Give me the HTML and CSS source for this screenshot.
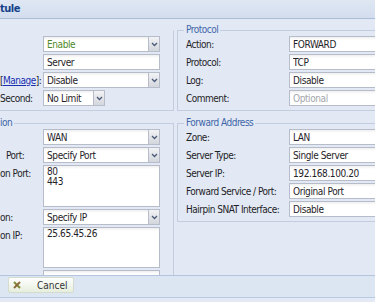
FILE: index.html
```html
<!DOCTYPE html>
<html lang="en">
<head>
    <meta charset="UTF-8" />
    <meta name="viewport" content="width=device-width, initial-scale=1.0"/>
    <title>Edit Rule</title>
    <link rel="stylesheet" href="styles.css">
</head>
<body>
<div class="window">
    <div class="title">tule</div>
    <div class="body">
        <div class="cols">
            <div class="col left">
                <fieldset class="no-top">
                    <legend></legend>
                    <div class="row"><label></label>
                        <div class="combo"><input class="field green" value="Enable" readonly><span class="trigger"><svg width="7" height="5" viewBox="0 0 7 5"><path d="M1 1 L3.5 3.5 L6 1" fill="none" stroke="#4a5a78" stroke-width="1.3"/></svg></span></div>
                    </div>
                    <div class="row"><label></label><input class="field" value="Server" readonly></div>
                    <div class="row"><label>[<a href="#">Manage</a>]:</label>
                        <div class="combo"><input class="field" value="Disable" readonly><span class="trigger"><svg width="7" height="5" viewBox="0 0 7 5"><path d="M1 1 L3.5 3.5 L6 1" fill="none" stroke="#4a5a78" stroke-width="1.3"/></svg></span></div>
                    </div>
                    <div class="row"><label>Second:</label>
                        <div class="combo short"><input class="field" value="No Limit" readonly><span class="trigger"><svg width="7" height="5" viewBox="0 0 7 5"><path d="M1 1 L3.5 3.5 L6 1" fill="none" stroke="#4a5a78" stroke-width="1.3"/></svg></span></div>
                    </div>
                </fieldset>
                <fieldset>
                    <legend>ion</legend>
                    <div class="row"><label></label>
                        <div class="combo"><input class="field" value="WAN" readonly><span class="trigger"><svg width="7" height="5" viewBox="0 0 7 5"><path d="M1 1 L3.5 3.5 L6 1" fill="none" stroke="#4a5a78" stroke-width="1.3"/></svg></span></div>
                    </div>
                    <div class="row"><label class="indent">Port:</label>
                        <div class="combo"><input class="field" value="Specify Port" readonly><span class="trigger"><svg width="7" height="5" viewBox="0 0 7 5"><path d="M1 1 L3.5 3.5 L6 1" fill="none" stroke="#4a5a78" stroke-width="1.3"/></svg></span></div>
                    </div>
                    <div class="row tall"><label>on Port:</label><textarea class="field area" readonly>80
443</textarea></div>
                    <div class="row"><label>on:</label>
                        <div class="combo"><input class="field" value="Specify IP" readonly><span class="trigger"><svg width="7" height="5" viewBox="0 0 7 5"><path d="M1 1 L3.5 3.5 L6 1" fill="none" stroke="#4a5a78" stroke-width="1.3"/></svg></span></div>
                    </div>
                    <div class="row tall short-area"><label>on IP:</label><textarea class="field area" readonly>25.65.45.26</textarea></div>
                    <div class="row more"><label></label><input class="field" readonly></div>
                </fieldset>
            </div>
            <div class="col right">
                <fieldset>
                    <legend>Protocol</legend>
                    <div class="row"><label>Action:</label><input class="field" value="FORWARD" readonly></div>
                    <div class="row"><label>Protocol:</label><input class="field" value="TCP" readonly></div>
                    <div class="row"><label>Log:</label><input class="field" value="Disable" readonly></div>
                    <div class="row"><label>Comment:</label><input class="field" placeholder="Optional" readonly></div>
                </fieldset>
                <fieldset>
                    <legend>Forward Address</legend>
                    <div class="row"><label>Zone:</label><input class="field" value="LAN" readonly></div>
                    <div class="row"><label>Server Type:</label><input class="field" value="Single Server" readonly></div>
                    <div class="row"><label>Server IP:</label><input class="field" value="192.168.100.20" readonly></div>
                    <div class="row"><label>Forward Service / Port:</label><input class="field" value="Original Port" readonly></div>
                    <div class="row"><label>Hairpin SNAT Interface:</label><input class="field" value="Disable" readonly></div>
                </fieldset>
            </div>
        </div>
    </div>
    <div class="toolbar">
        <button class="btn">
            <svg width="8" height="8" viewBox="0 0 8 8"><path d="M1 1 L7 7" stroke="#7d8b33" stroke-width="2"/><path d="M7 1 L1 7" stroke="#8c6b3c" stroke-width="2"/></svg>
            <span>Cancel</span>
        </button>
    </div>
    <div class="footer"></div>
</div>
</body>
</html>
```

FILE: styles.css
```css
body {
    margin: 0;
    font-family: "Liberation Sans Narrow", "DejaVu Sans Condensed", "Liberation Sans", sans-serif;
    font-size: 10px;
    letter-spacing: -0.5px;
    color: #1f2328;
    background: #e2e9f4;
}
.window {
    width: 375px;
    height: 302px;
    display: flex;
    flex-direction: column;
    overflow: hidden;
    background: #e2e9f4;
}
.title {
    height: 18px;
    line-height: 18px;
    flex-shrink: 0;
    border-bottom: 1px solid #aabcd8;
    background: linear-gradient(#dfe7f3, #d3ddee);
    color: #15428b;
    font-weight: bold;
    font-size: 11px;
}
.body {
    flex: 1;
    overflow: hidden;
    padding-top: 5px;
}
.cols {
    display: flex;
    gap: 3px;
    margin-left: -9px;
}
.col {
    display: flex;
    flex-direction: column;
    gap: 6px;
    flex-shrink: 0;
}
fieldset {
    margin: 0;
    border: 1px solid #c2cde0;
    padding: 0 13px 2px 8px;
    box-sizing: border-box;
    min-width: 0;
}
fieldset.no-top {
    border-top-color: transparent;
}
legend {
    padding: 0 2px;
    margin-left: -2px;
    height: 12px;
    line-height: 12px;
    color: #3f66a8;
}
.left fieldset {
    width: 183px;
}
.right fieldset {
    width: 260px;
}
.row {
    display: flex;
    align-items: center;
    height: 16px;
    margin-bottom: 2px;
}
.row label {
    flex-shrink: 0;
    white-space: nowrap;
    overflow: hidden;
}
.left .row label {
    width: 43px;
}
.right .row label {
    width: 103px;
}
.row label.indent {
    padding-left: 6px;
    width: 37px;
}
.row a {
    color: #1a2fb0;
}
.field {
    width: 117px;
    height: 16px;
    box-sizing: border-box;
    border: 1px solid #b7bccb;
    background: linear-gradient(#efefef, #fff 3px);
    font: inherit;
    letter-spacing: -0.4px;
    color: #1f2328;
    padding: 0 3px;
    margin: 0;
    outline: none;
}
.field::placeholder {
    color: #a3a6ad;
}
.right .field {
    width: 130px;
}
.field.green {
    color: #4f8a2c;
}
.combo {
    display: flex;
    width: 117px;
    height: 16px;
}
.combo.short {
    width: 62px;
}
.combo .field {
    flex: 1;
    width: auto;
    min-width: 0;
    border-right: 0;
}
.trigger {
    width: 12px;
    box-sizing: border-box;
    border: 1px solid #b7bccb;
    background: linear-gradient(#f2f3f5, #d3d6dc);
    display: flex;
    align-items: center;
    justify-content: center;
}
.row.tall {
    align-items: flex-start;
    height: 42px;
}
.row.short-area {
    height: 41px;
}
.row.tall label {
    padding-top: 3px;
}
.area {
    height: 100%;
    resize: none;
    padding: 1px 3px;
    line-height: 10px;
    overflow: hidden;
}
.toolbar {
    flex-shrink: 0;
    height: 20px;
    border-top: 1px solid #b2c4de;
    border-bottom: 1px solid #b9c9e0;
    background: #dce5f2;
    padding: 1px 8px 0;
    box-sizing: content-box;
}
.btn {
    display: flex;
    align-items: center;
    width: 66px;
    height: 16px;
    padding: 0 0 0 4px;
    border: 1px solid #d4dccd;
    border-radius: 2px;
    background: linear-gradient(#ffffff, #e6eedd);
    font: inherit;
    color: #333;
}
.btn span {
    margin-left: 16px;
}
.footer {
    flex-shrink: 0;
    height: 4px;
    background: #e4eaf5;
}
```
